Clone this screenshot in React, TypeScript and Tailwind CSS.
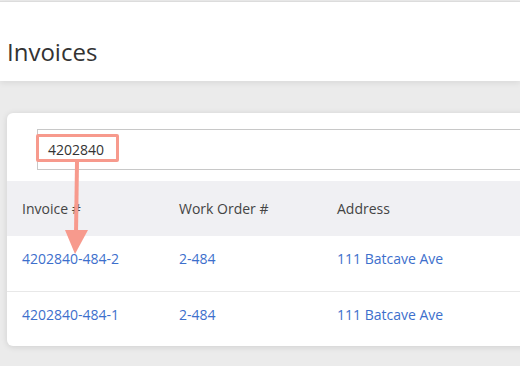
const rows = [
  { invoice: "4202840-484-2", workOrder: "2-484", address: "111 Batcave Ave" },
  { invoice: "4202840-484-1", workOrder: "2-484", address: "111 Batcave Ave" },
];

export default function App() {
  return (
    <div
      className="relative h-[366px] w-[520px] overflow-hidden bg-[#ebebeb]"
      style={{ fontFamily: '"Open Sans", "Noto Sans", sans-serif' }}
    >
      <header className="relative z-10 mt-px h-[80px] border-t border-[#dcdcdc] bg-white px-[7px] pt-[34px] shadow-[0_2px_6px_rgba(0,0,0,0.08)]">
        <h1 className="text-[24px] leading-8 font-normal text-[#333]">Invoices</h1>
      </header>

      <main className="pt-[32px] pl-[7px]">
        <section className="w-[600px] overflow-hidden rounded-md bg-white shadow-[0_1px_6px_rgba(0,0,0,0.12)]">
          <div className="pt-[16px] pb-[11px] pl-[30px]">
            <div className="flex h-[41px] items-center border border-[#c8c8c8] pl-[10px] text-[14px] text-[#333]">
              4202840
            </div>
          </div>
          <div className="grid h-[55px] grid-cols-[157px_158px_1fr] items-center bg-[#f0f0f3] pl-[15px] text-[14px] text-[#444]">
            <span>Invoice #</span>
            <span>Work Order #</span>
            <span>Address</span>
          </div>
          {rows.map((row, i) => (
            <div
              key={row.invoice}
              className={
                "grid h-[55px] grid-cols-[157px_158px_1fr] items-start pt-[13px] pl-[15px] text-[14px] leading-5 text-[#3d6fcc] " +
                (i > 0 ? "border-t border-[#e8e8e8]" : "")
              }
            >
              <a>{row.invoice}</a>
              <a>{row.workOrder}</a>
              <a>{row.address}</a>
            </div>
          ))}
        </section>
      </main>

      {/* annotation */}
      <div className="absolute top-[134px] left-[36px] h-[28px] w-[83px] rounded-[2px] border-[3px] border-[#f79a8d]" />
      <svg className="absolute top-0 left-0" width="520" height="366" viewBox="0 0 520 366">
        <line x1="77" y1="162" x2="76" y2="234" stroke="#f79a8d" strokeWidth="4" />
        <polygon points="65,230 88,230 75,254" fill="#f79a8d" />
      </svg>
    </div>
  );
}
